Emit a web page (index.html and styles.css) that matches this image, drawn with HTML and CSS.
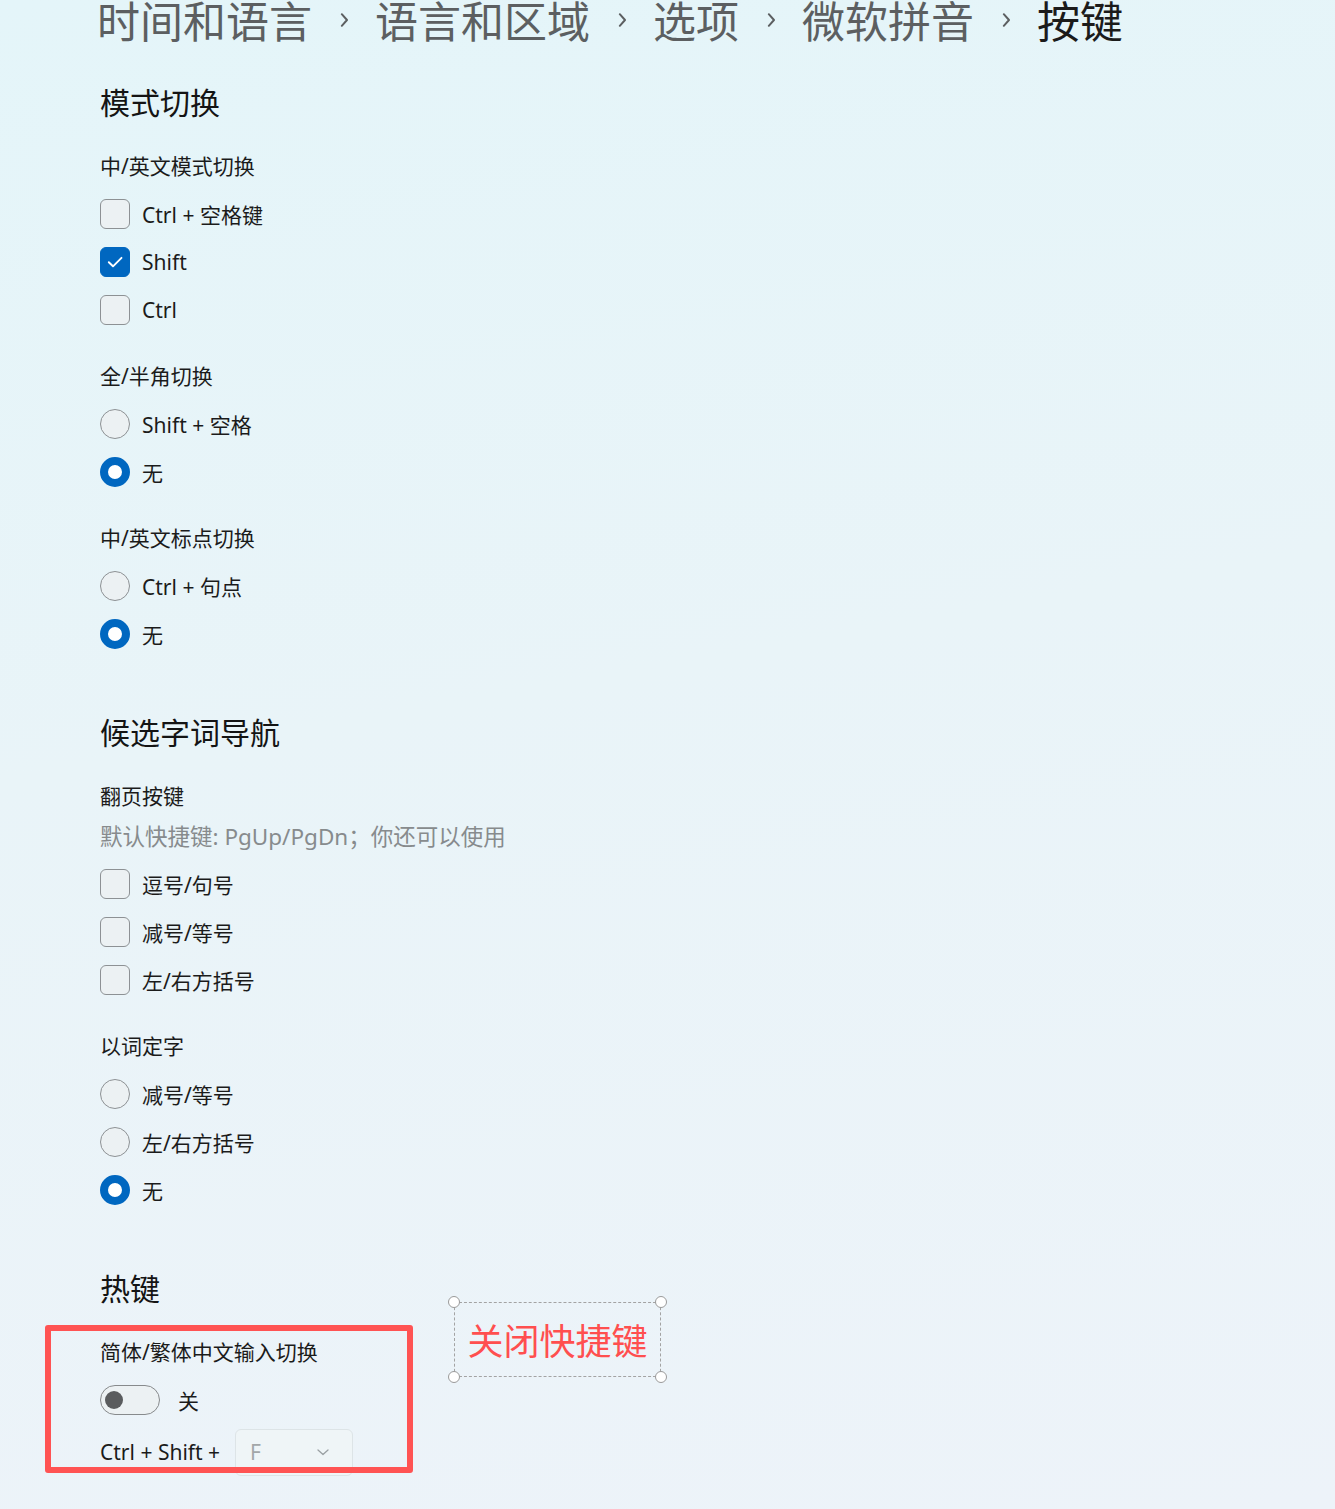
FILE: index.html
```html
<!DOCTYPE html>
<html lang="zh-CN">
<head>
<meta charset="utf-8">
<title>按键</title>
<link rel="stylesheet" href="styles.css">
</head>
<body>
<div class="page">
  <nav class="crumbs">
    <span class="crumb">时间和语言</span>
    <svg class="sep" width="10" height="16" viewBox="0 0 10 16"><path d="M2.8 2.2 L8 8 L2.8 13.8" fill="none" stroke="#5c5f61" stroke-width="2" stroke-linecap="round" stroke-linejoin="round"/></svg>
    <span class="crumb">语言和区域</span>
    <svg class="sep" width="10" height="16" viewBox="0 0 10 16"><path d="M2.8 2.2 L8 8 L2.8 13.8" fill="none" stroke="#5c5f61" stroke-width="2" stroke-linecap="round" stroke-linejoin="round"/></svg>
    <span class="crumb">选项</span>
    <svg class="sep" width="10" height="16" viewBox="0 0 10 16"><path d="M2.8 2.2 L8 8 L2.8 13.8" fill="none" stroke="#5c5f61" stroke-width="2" stroke-linecap="round" stroke-linejoin="round"/></svg>
    <span class="crumb">微软拼音</span>
    <svg class="sep" width="10" height="16" viewBox="0 0 10 16"><path d="M2.8 2.2 L8 8 L2.8 13.8" fill="none" stroke="#5c5f61" stroke-width="2" stroke-linecap="round" stroke-linejoin="round"/></svg>
    <span class="crumb current">按键</span>
  </nav>

  <section class="section first">
    <h2 class="section-title">模式切换</h2>
    <div class="group">
      <div class="group-label">中/英文模式切换</div>
      <label class="option"><span class="check"></span><span>Ctrl + 空格键</span></label>
      <label class="option"><span class="check on"><svg width="30" height="30" viewBox="0 0 30 30"><path d="M8.8 15.2 L13 19.3 L21.5 10.8" fill="none" stroke="#fff" stroke-width="1.9" stroke-linecap="round" stroke-linejoin="round"/></svg></span><span>Shift</span></label>
      <label class="option"><span class="check"></span><span>Ctrl</span></label>
    </div>
    <div class="group">
      <div class="group-label">全/半角切换</div>
      <label class="option"><span class="radio"></span><span>Shift + 空格</span></label>
      <label class="option"><span class="radio on"></span><span>无</span></label>
    </div>
    <div class="group">
      <div class="group-label">中/英文标点切换</div>
      <label class="option"><span class="radio"></span><span>Ctrl + 句点</span></label>
      <label class="option"><span class="radio on"></span><span>无</span></label>
    </div>
  </section>

  <section class="section">
    <h2 class="section-title">候选字词导航</h2>
    <div class="group">
      <div class="group-label">翻页按键</div>
      <div class="desc">默认快捷键: PgUp/PgDn；你还可以使用</div>
      <label class="option"><span class="check"></span><span>逗号/句号</span></label>
      <label class="option"><span class="check"></span><span>减号/等号</span></label>
      <label class="option"><span class="check"></span><span>左/右方括号</span></label>
    </div>
    <div class="group">
      <div class="group-label">以词定字</div>
      <label class="option"><span class="radio"></span><span>减号/等号</span></label>
      <label class="option"><span class="radio"></span><span>左/右方括号</span></label>
      <label class="option"><span class="radio on"></span><span>无</span></label>
    </div>
  </section>

  <section class="section">
    <h2 class="section-title">热键</h2>
    <div class="group">
      <div class="group-label">简体/繁体中文输入切换</div>
      <div class="option toggle-row"><span class="toggle"><span class="knob"></span></span><span class="toggle-text">关</span></div>
      <div class="option combo-row">
        <span>Ctrl + Shift +</span>
        <span class="combo"><span class="combo-value">F</span><svg width="14" height="10" viewBox="0 0 14 10"><path d="M2 3 L7 7.5 L12 3" fill="none" stroke="#9aa0a3" stroke-width="1.3" stroke-linecap="round" stroke-linejoin="round"/></svg></span>
      </div>
    </div>
  </section>
</div>

<div class="highlight"></div>

<div class="note">
  <span class="note-text">关闭快捷键</span>
  <span class="handle tl"></span>
  <span class="handle tr"></span>
  <span class="handle bl"></span>
  <span class="handle br"></span>
</div>
</body>
</html>
```

FILE: styles.css
```css
html, body {
  margin: 0;
  padding: 0;
}
body {
  width: 1335px;
  height: 1509px;
  overflow: hidden;
  position: relative;
  background: linear-gradient(170deg, #e4f5f9 0%, #e9f4f8 45%, #edf3f9 100%);
  font-family: "Noto Sans", "Noto Sans CJK SC", sans-serif;
  color: #1b1b1b;
}
.page {
  padding-left: 100px;
}
.crumbs {
  display: flex;
  align-items: center;
  height: 48px;
  margin-top: -5px;
  margin-left: -3px;
}
.crumb {
  font-size: 43px;
  line-height: 48px;
  color: #5c5f61;
  font-family: "Noto Sans CJK SC", sans-serif;
}
.crumb.current {
  color: #1b1b1b;
}
.sep {
  margin: 2px 26px 0 27px;
  flex: none;
}
.section {
  margin-top: 50px;
}
.section.first {
  margin-top: 35px;
}
.section-title {
  margin: 0;
  height: 48px;
  line-height: 46px;
  font-size: 30px;
  font-weight: 400;
  font-family: "Noto Sans CJK SC", sans-serif;
  color: #141414;
}
.group {
  margin-top: 18px;
}
.section-title + .group {
  margin-top: 16px;
}
.group-label {
  height: 48px;
  line-height: 48px;
  font-size: 21px;
}
.desc {
  height: 40px;
  line-height: 34px;
  font-size: 22.5px;
  color: #878b8d;
}
.option {
  display: flex;
  align-items: center;
  height: 48px;
  font-size: 21px;
  gap: 12px;
}
.check {
  box-sizing: border-box;
  width: 30px;
  height: 30px;
  border: 1.5px solid #8d9194;
  border-radius: 6px;
  background: #ecf1f3;
  flex: none;
}
.check.on {
  background: #0067c0;
  border-color: #0067c0;
}
.check.on svg {
  display: block;
  margin: -1.5px;
}
.radio {
  box-sizing: border-box;
  width: 30px;
  height: 30px;
  border: 1.5px solid #8d9194;
  border-radius: 50%;
  background: #ecf1f3;
  flex: none;
}
.radio.on {
  border: 8px solid #0067c0;
  background: #ffffff;
}
.toggle-row {
  gap: 18px;
}
.toggle {
  box-sizing: border-box;
  width: 60px;
  height: 30px;
  border: 1.5px solid #878a8c;
  border-radius: 15px;
  background: #ecf1f3;
  display: flex;
  align-items: center;
  padding-left: 4px;
  flex: none;
}
.knob {
  width: 18px;
  height: 18px;
  border-radius: 50%;
  background: #5a5c5e;
}
.combo-row {
  gap: 15px;
  margin-top: 4px;
}
.combo {
  box-sizing: border-box;
  width: 118px;
  height: 47px;
  border: 1px solid #dde4e7;
  border-radius: 6px;
  background: #eff5f7;
  display: flex;
  align-items: center;
  justify-content: space-between;
  padding: 0 22px 0 14px;
}
.combo-value {
  color: #a3a7a9;
  font-size: 21px;
}
.highlight {
  position: absolute;
  left: 45px;
  top: 1325px;
  width: 368px;
  height: 148px;
  box-sizing: border-box;
  border: 6px solid #ff5353;
  border-radius: 3px;
}
.note {
  position: absolute;
  left: 454px;
  top: 1302px;
  width: 207px;
  height: 75px;
  box-sizing: border-box;
  border: 1.5px dashed #a3a3a3;
  display: flex;
  align-items: center;
  justify-content: center;
}
.note-text {
  font-family: "Noto Sans CJK SC", sans-serif;
  font-size: 36px;
  color: #ff4f4f;
  line-height: 1;
  margin-top: -1px;
}
.handle {
  position: absolute;
  width: 12px;
  height: 12px;
  box-sizing: border-box;
  border: 1.5px solid #9a9a9a;
  border-radius: 50%;
  background: #ffffff;
}
.handle.tl { left: -7px; top: -7px; }
.handle.tr { right: -7px; top: -7px; }
.handle.bl { left: -7px; bottom: -7px; }
.handle.br { right: -7px; bottom: -7px; }
```
